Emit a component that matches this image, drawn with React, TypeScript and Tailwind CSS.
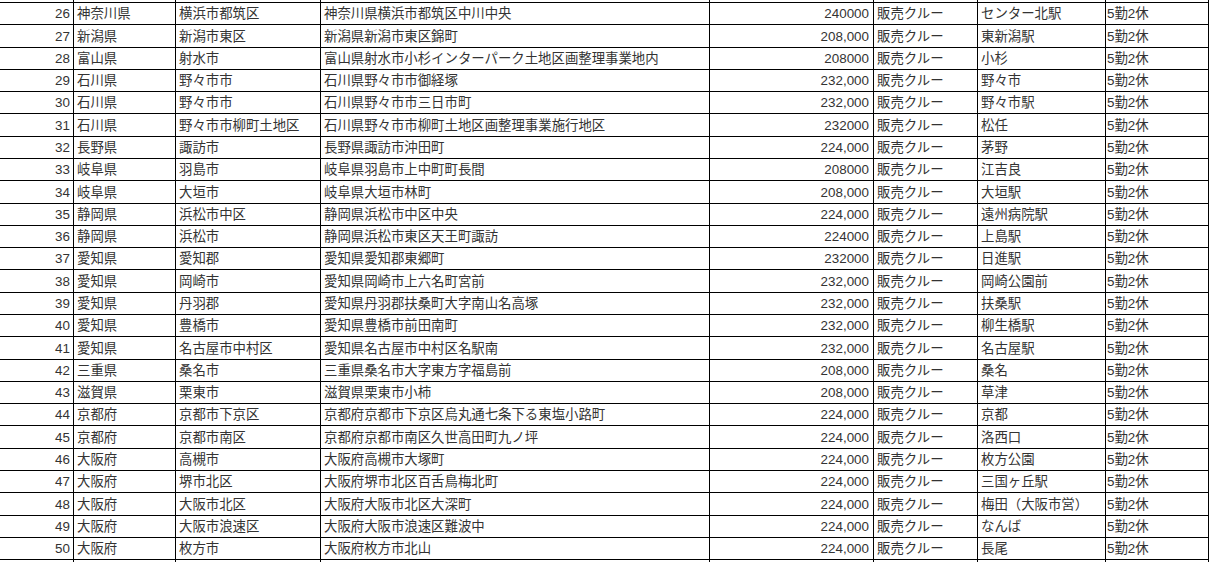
import React from "react";

type Row = {
  no: number;
  pref: string;
  city: string;
  address: string;
  salary: string;
  job: string;
  station: string;
  shift: string;
};

const rows: Row[] = [
  { no: 26, pref: "神奈川県", city: "横浜市都筑区", address: "神奈川県横浜市都筑区中川中央", salary: "240000", job: "販売クルー", station: "センター北駅", shift: "5勤2休" },
  { no: 27, pref: "新潟県", city: "新潟市東区", address: "新潟県新潟市東区錦町", salary: "208,000", job: "販売クルー", station: "東新潟駅", shift: "5勤2休" },
  { no: 28, pref: "富山県", city: "射水市", address: "富山県射水市小杉インターパーク土地区画整理事業地内", salary: "208000", job: "販売クルー", station: "小杉", shift: "5勤2休" },
  { no: 29, pref: "石川県", city: "野々市市", address: "石川県野々市市御経塚", salary: "232,000", job: "販売クルー", station: "野々市", shift: "5勤2休" },
  { no: 30, pref: "石川県", city: "野々市市", address: "石川県野々市市三日市町", salary: "232,000", job: "販売クルー", station: "野々市駅", shift: "5勤2休" },
  { no: 31, pref: "石川県", city: "野々市市柳町土地区", address: "石川県野々市市柳町土地区画整理事業施行地区", salary: "232000", job: "販売クルー", station: "松任", shift: "5勤2休" },
  { no: 32, pref: "長野県", city: "諏訪市", address: "長野県諏訪市沖田町", salary: "224,000", job: "販売クルー", station: "茅野", shift: "5勤2休" },
  { no: 33, pref: "岐阜県", city: "羽島市", address: "岐阜県羽島市上中町町長間", salary: "208000", job: "販売クルー", station: "江吉良", shift: "5勤2休" },
  { no: 34, pref: "岐阜県", city: "大垣市", address: "岐阜県大垣市林町", salary: "208,000", job: "販売クルー", station: "大垣駅", shift: "5勤2休" },
  { no: 35, pref: "静岡県", city: "浜松市中区", address: "静岡県浜松市中区中央", salary: "224,000", job: "販売クルー", station: "遠州病院駅", shift: "5勤2休" },
  { no: 36, pref: "静岡県", city: "浜松市", address: "静岡県浜松市東区天王町諏訪", salary: "224000", job: "販売クルー", station: "上島駅", shift: "5勤2休" },
  { no: 37, pref: "愛知県", city: "愛知郡", address: "愛知県愛知郡東郷町", salary: "232000", job: "販売クルー", station: "日進駅", shift: "5勤2休" },
  { no: 38, pref: "愛知県", city: "岡崎市", address: "愛知県岡崎市上六名町宮前", salary: "232,000", job: "販売クルー", station: "岡崎公園前", shift: "5勤2休" },
  { no: 39, pref: "愛知県", city: "丹羽郡", address: "愛知県丹羽郡扶桑町大字南山名高塚", salary: "232,000", job: "販売クルー", station: "扶桑駅", shift: "5勤2休" },
  { no: 40, pref: "愛知県", city: "豊橋市", address: "愛知県豊橋市前田南町", salary: "232,000", job: "販売クルー", station: "柳生橋駅", shift: "5勤2休" },
  { no: 41, pref: "愛知県", city: "名古屋市中村区", address: "愛知県名古屋市中村区名駅南", salary: "232,000", job: "販売クルー", station: "名古屋駅", shift: "5勤2休" },
  { no: 42, pref: "三重県", city: "桑名市", address: "三重県桑名市大字東方字福島前", salary: "208,000", job: "販売クルー", station: "桑名", shift: "5勤2休" },
  { no: 43, pref: "滋賀県", city: "栗東市", address: "滋賀県栗東市小柿", salary: "208,000", job: "販売クルー", station: "草津", shift: "5勤2休" },
  { no: 44, pref: "京都府", city: "京都市下京区", address: "京都府京都市下京区烏丸通七条下る東塩小路町", salary: "224,000", job: "販売クルー", station: "京都", shift: "5勤2休" },
  { no: 45, pref: "京都府", city: "京都市南区", address: "京都府京都市南区久世高田町九ノ坪", salary: "224,000", job: "販売クルー", station: "洛西口", shift: "5勤2休" },
  { no: 46, pref: "大阪府", city: "高槻市", address: "大阪府高槻市大塚町", salary: "224,000", job: "販売クルー", station: "枚方公園", shift: "5勤2休" },
  { no: 47, pref: "大阪府", city: "堺市北区", address: "大阪府堺市北区百舌鳥梅北町", salary: "224,000", job: "販売クルー", station: "三国ヶ丘駅", shift: "5勤2休" },
  { no: 48, pref: "大阪府", city: "大阪市北区", address: "大阪府大阪市北区大深町", salary: "224,000", job: "販売クルー", station: "梅田（大阪市営）", shift: "5勤2休" },
  { no: 49, pref: "大阪府", city: "大阪市浪速区", address: "大阪府大阪市浪速区難波中", salary: "224,000", job: "販売クルー", station: "なんば", shift: "5勤2休" },
  { no: 50, pref: "大阪府", city: "枚方市", address: "大阪府枚方市北山", salary: "224,000", job: "販売クルー", station: "長尾", shift: "5勤2休" },
];

// Excel rows land on 22/23px alternately
const tallRows = new Set([1, 5, 8, 12, 15, 19, 22]);

const cell = "flex items-center overflow-hidden whitespace-nowrap border-r border-black pt-px";

function Cells({ r }: { r?: Row }) {
  return (
    <>
      <div className={`${cell} w-[74px] justify-end pr-[3px]`}>{r?.no}</div>
      <div className={`${cell} w-[102px] pl-[3px]`}>{r?.pref}</div>
      <div className={`${cell} w-[145px] pl-[3px]`}>{r?.city}</div>
      <div className={`${cell} w-[389px] pl-[3px]`}>{r?.address}</div>
      <div className={`${cell} w-[164px] justify-end pr-[4px]`}>{r?.salary}</div>
      <div className={`${cell} w-[104px] pl-[3px]`}>{r?.job}</div>
      <div className={`${cell} w-[128px] pl-[3px]`}>{r?.station}</div>
      <div className={`${cell} w-[103px] pl-px`}>{r?.shift}</div>
    </>
  );
}

export default function App() {
  return (
    <div className="h-[562px] w-[1210px] overflow-hidden bg-white font-['Liberation_Sans','Noto_Sans_CJK_JP',sans-serif] text-[13.4px] leading-none text-[#333]">
      <div className="flex w-[1209px] flex-col">
        <div className="flex h-[3px] border-b border-black">
          <Cells />
        </div>
        {rows.map((r, i) => (
          <div
            key={r.no}
            className={`flex border-b border-black ${tallRows.has(i) ? "h-[23px]" : "h-[22px]"}`}
          >
            <Cells r={r} />
          </div>
        ))}
        <div className="flex h-[4px]">
          <Cells />
        </div>
      </div>
    </div>
  );
}
